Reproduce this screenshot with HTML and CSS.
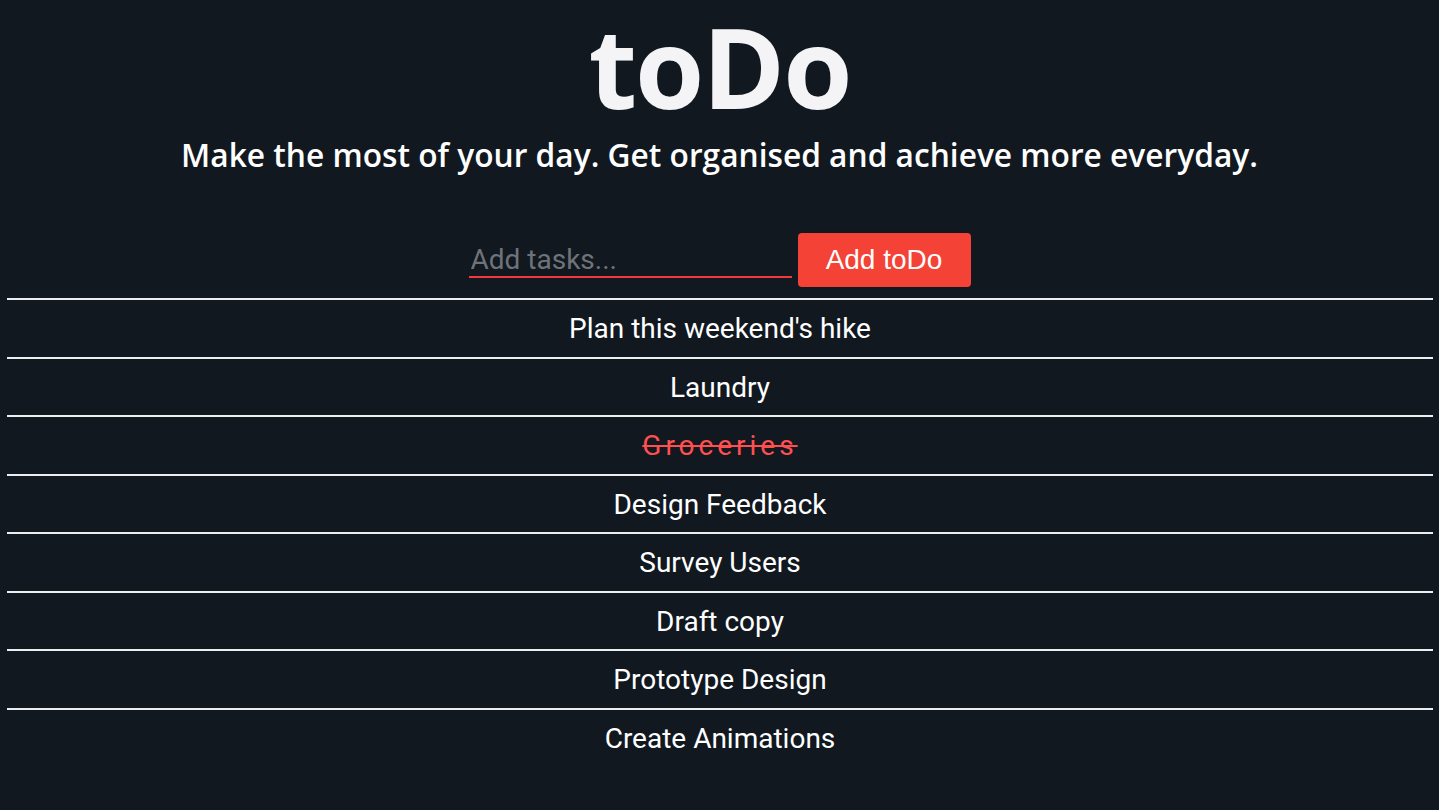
FILE: index.html
```html
<!DOCTYPE html>
<html lang="en">
<head>
<meta charset="utf-8">
<title>toDo</title>
<link rel="stylesheet" href="styles.css">
</head>
<body>
<header class="header">
  <h1 class="title">toDo</h1>
  <p class="subtitle">Make the most of your day. Get organised and achieve more everyday.</p>
</header>
<form class="add-form">
  <input class="task-input" type="text" placeholder="Add tasks...">
  <button class="add-btn" type="button">Add toDo</button>
</form>
<ul class="task-list">
  <li class="task">Plan this weekend's hike</li>
  <li class="task">Laundry</li>
  <li class="task done">Groceries</li>
  <li class="task">Design Feedback</li>
  <li class="task">Survey Users</li>
  <li class="task">Draft copy</li>
  <li class="task">Prototype Design</li>
  <li class="task">Create Animations</li>
</ul>
</body>
</html>
```
FILE: styles.css
```css
html, body {
  margin: 0;
  padding: 0;
  background: #111820;
  height: 100%;
}
body {
  font-family: Roboto, "Liberation Sans", sans-serif;
  color: #ffffff;
}
.header {
  text-align: center;
  padding-top: 0;
}
.title {
  margin: 0;
  font-family: "Open Sans", "Noto Sans", sans-serif;
  font-weight: 700;
  font-size: 112px;
  line-height: 132px;
  color: #f4f4f7;
  letter-spacing: -2px;
}
.subtitle {
  margin: 3px 0 0;
  font-family: "Open Sans", "Noto Sans", sans-serif;
  font-weight: 600;
  font-size: 31.7px;
  line-height: 40px;
  color: #ffffff;
}
.add-form {
  display: flex;
  justify-content: center;
  align-items: flex-end;
  gap: 6px;
  margin-top: 58px;
}
.task-input {
  width: 323px;
  height: 38px;
  box-sizing: border-box;
  background: transparent;
  border: none;
  border-bottom: 2px solid #f23a3c;
  color: #fff;
  font-family: Roboto, sans-serif;
  font-size: 28px;
  padding: 3px 2px 0;
  outline: none;
  margin-bottom: 9px;
}
.task-input::placeholder {
  color: #6f7378;
}
.add-btn {
  width: 173px;
  height: 54px;
  background: #f44336;
  color: #fff;
  border: none;
  border-radius: 4px;
  font-family: "Liberation Sans", Arial, sans-serif;
  font-size: 28px;
  padding: 0;
}
.task-list {
  list-style: none;
  margin: 11px 6px 0 7px;
  padding: 0;
}
.task {
  border-top: 2px solid #eeeeee;
  text-align: center;
  font-size: 28px;
  line-height: 28.5px;
  padding: 15px 0 13px;
}
.task.done {
  color: #ff4f4f;
  text-decoration: line-through;
  letter-spacing: 4px;
}
```
